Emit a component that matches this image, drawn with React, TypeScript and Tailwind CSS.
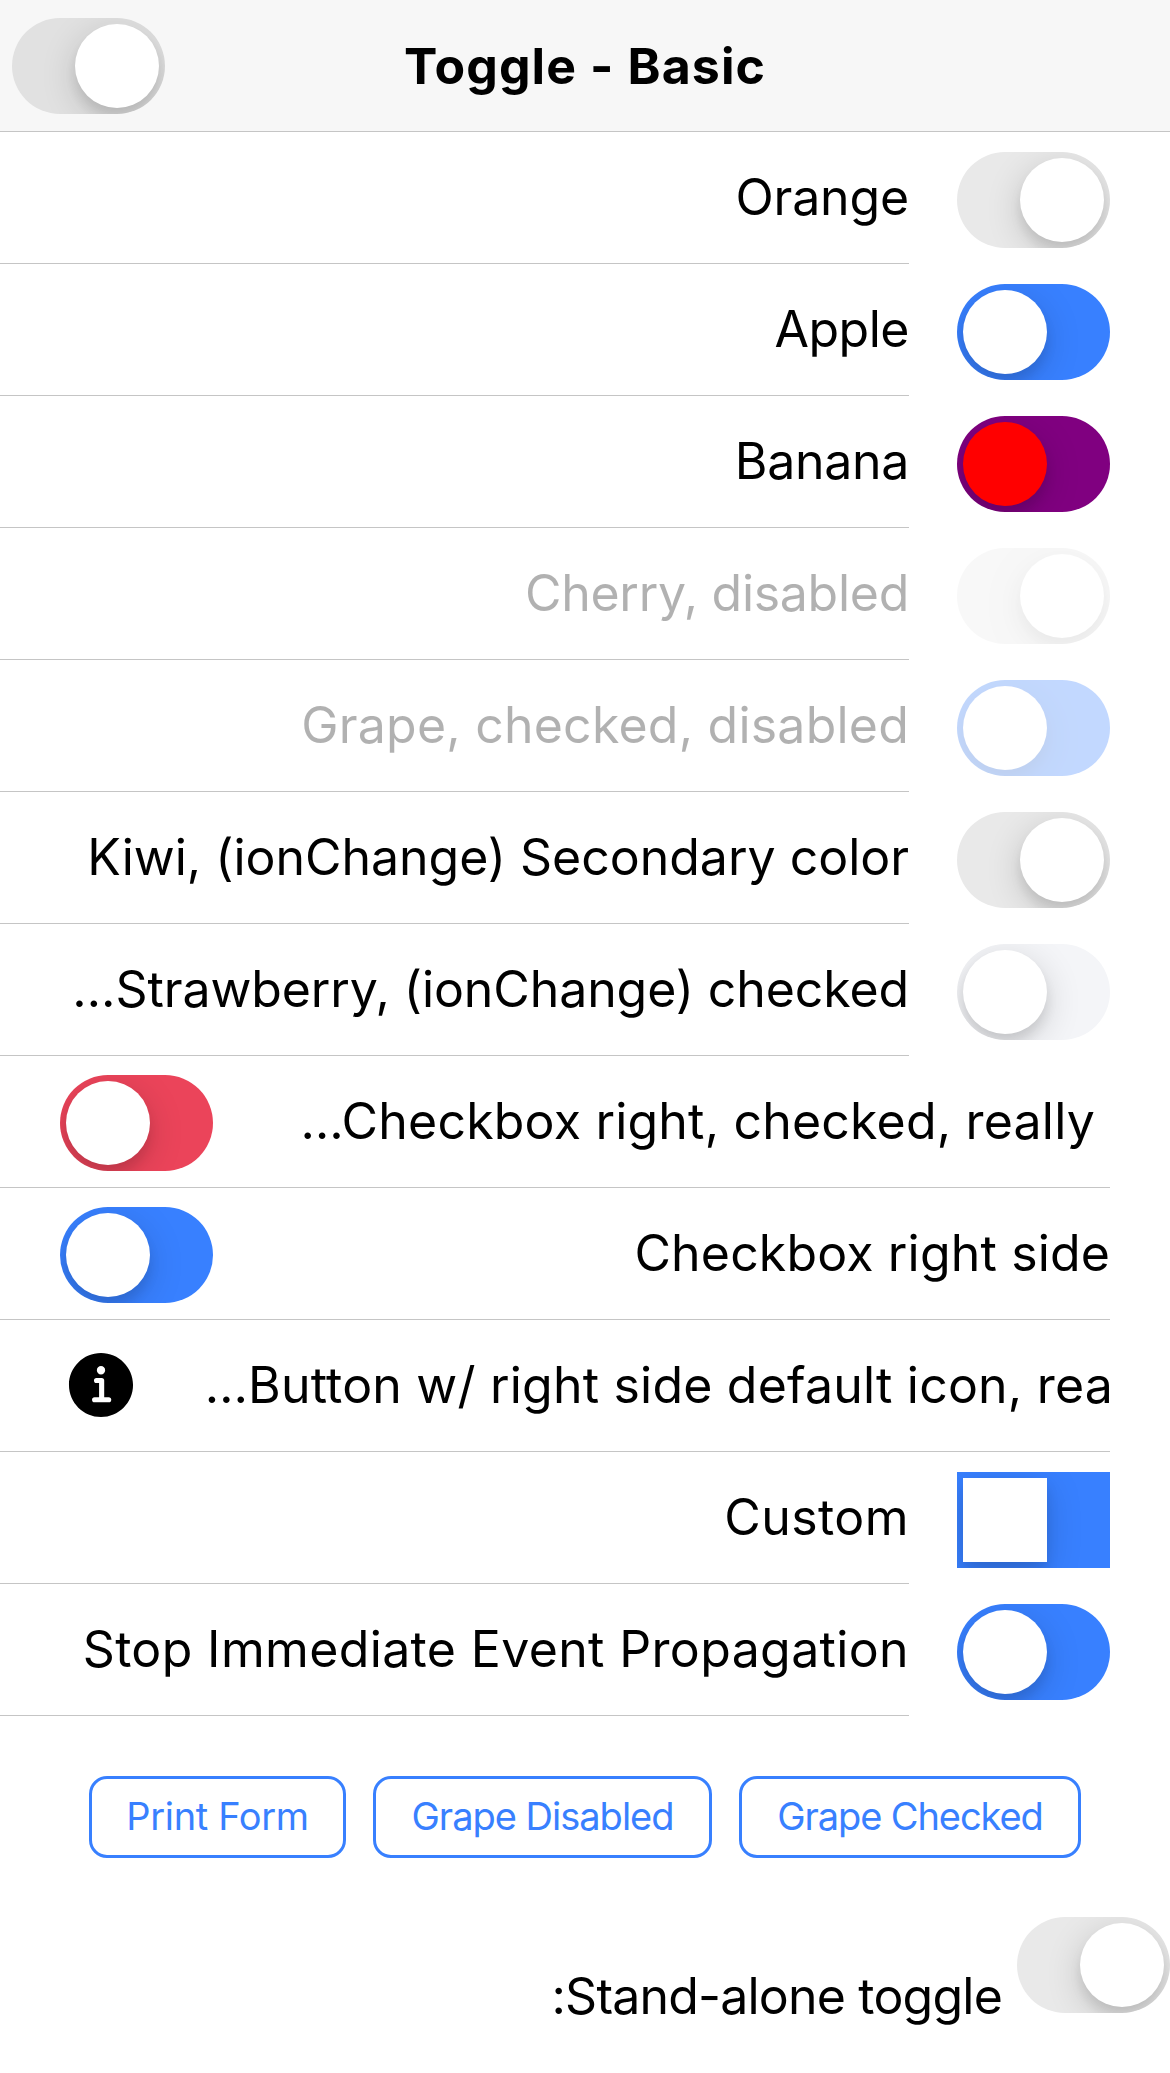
import type { ReactNode } from "react";
import { IoInformationCircle } from "react-icons/io5";

type ToggleProps = {
  on?: boolean;
  track?: string;
  knob?: string;
  square?: boolean;
  disabled?: boolean;
};

function Toggle({ on, track = "bg-[#e9e9e9]", knob = "bg-white", square, disabled }: ToggleProps) {
  return (
    <button
      type="button"
      role="switch"
      aria-checked={!!on}
      className={`flex h-24 w-[153px] shrink-0 overflow-hidden p-1.5 ${square ? "" : "rounded-full"} ${track} ${
        on ? "justify-start" : "justify-end"
      } ${disabled ? "opacity-30" : ""}`}
    >
      <span
        className={`size-[84px] shadow-[0_9px_36px_rgba(0,0,0,0.16),0_9px_12px_rgba(0,0,0,0.09)] ${
          square ? "" : "rounded-full"
        } ${knob}`}
      />
    </button>
  );
}

type RowProps = ToggleProps & { label: string; tracking: string };

function StartRow({ label, tracking, disabled, ...toggle }: RowProps) {
  return (
    <div className="flex h-[132px] pr-[60px]">
      <div className="mr-12 flex min-w-0 flex-1 items-center justify-end border-b border-[#c5c5c5]">
        <span className={`whitespace-nowrap pb-0.5 ${tracking} ${disabled ? "opacity-30" : ""}`}>{label}</span>
      </div>
      <div className="pt-5">
        <Toggle disabled={disabled} {...toggle} />
      </div>
    </div>
  );
}

type EndRowProps = { label: string; tracking: string; labelClass?: string; children: ReactNode };

function EndRow({ label, tracking, labelClass = "", children }: EndRowProps) {
  return (
    <div className="flex h-[132px] pr-[60px]">
      <div className="flex min-w-0 flex-1 items-center justify-between border-b border-[#c5c5c5] pl-[60px]">
        {children}
        <span className={`whitespace-nowrap pb-0.5 ${tracking} ${labelClass}`}>{label}</span>
      </div>
    </div>
  );
}

function OutlineButton({ label, className }: { label: string; className: string }) {
  return (
    <button
      type="button"
      className={`h-[82px] rounded-[18px] border-[3px] border-[#3880ff] pb-0.5 text-[38px] text-[#3880ff] whitespace-nowrap ${className}`}
    >
      {label}
    </button>
  );
}

const blue = "bg-[#3880ff]";

export default function App() {
  return (
    <div className="flex h-[2073px] w-[1170px] flex-col overflow-hidden bg-white font-['Inter',sans-serif] text-[50px] leading-[60px] text-black">
      <header className="grid h-[132px] shrink-0 grid-cols-[165px_1fr_165px] items-center border-b border-[#c5c5c5] bg-[#f7f7f7]">
        <div className="pl-3">
          <Toggle track="bg-[#e1e1e1]" />
        </div>
        <h1 className="text-center font-bold tracking-[1.1px]">Toggle - Basic</h1>
      </header>
      <main>
        <StartRow label="Orange" tracking="tracking-[-0.15px]" />
        <StartRow label="Apple" tracking="tracking-[-0.5px]" on track={blue} />
        <StartRow label="Banana" tracking="tracking-[-0.3px]" on track="bg-[#800080]" knob="bg-[#ff0000]" />
        <StartRow label="Cherry, disabled" tracking="tracking-[-0.28px]" disabled />
        <StartRow label="Grape, checked, disabled" tracking="tracking-[0.22px]" on track={blue} disabled />
        <StartRow label="Kiwi, (ionChange) Secondary color" tracking="tracking-[-0.02px]" />
        <StartRow label="…Strawberry, (ionChange) checked" tracking="tracking-[-0.1px]" on track="bg-[#f4f5f8]" />
        <EndRow label="…Checkbox right, checked, really" tracking="tracking-[0.19px]" labelClass="mr-[15px]">
          <div className="pt-0.5">
            <Toggle on track="bg-[#eb445a]" />
          </div>
        </EndRow>
        <EndRow label="Checkbox right side" tracking="tracking-[0.15px]">
          <div className="pt-0.5">
            <Toggle on track={blue} />
          </div>
        </EndRow>
        <EndRow label="…Button w/ right side default icon, rea" tracking="tracking-[0.2px]" labelClass="-mr-[3px]">
          <IoInformationCircle className="mb-0.5 size-[82px]" />
        </EndRow>
        <StartRow label="Custom" tracking="tracking-[0.45px]" on track={blue} square />
        <StartRow label="Stop Immediate Event Propagation" tracking="tracking-[0.36px]" on track={blue} />
        <div className="flex justify-center gap-[27px] pt-[60px]">
          <OutlineButton label="Print Form" className="w-[257px] tracking-[-0.35px]" />
          <OutlineButton label="Grape Disabled" className="w-[339px] tracking-[-1px]" />
          <OutlineButton label="Grape Checked" className="w-[342px] tracking-[-1.1px]" />
        </div>
        <div className="flex items-end justify-end gap-[15px] pt-[59px]">
          <span className="-mb-[13px] tracking-[-0.8px]">:Stand-alone toggle</span>
          <Toggle />
        </div>
      </main>
    </div>
  );
}
